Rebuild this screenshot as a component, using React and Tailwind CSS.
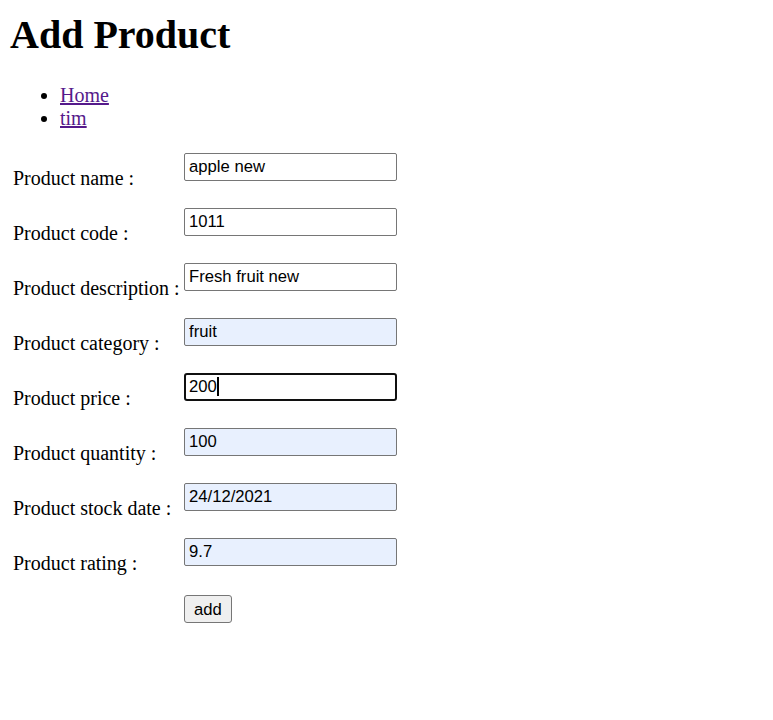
import React from "react";

const rows = [
  { label: "Product name :", value: "apple new", auto: false },
  { label: "Product code :", value: "1011", auto: false },
  { label: "Product description :", value: "Fresh fruit new", auto: false },
  { label: "Product category :", value: "fruit", auto: true },
  { label: "Product price :", value: "200", focus: true },
  { label: "Product quantity :", value: "100", auto: true },
  { label: "Product stock date :", value: "24/12/2021", auto: true },
  { label: "Product rating :", value: "9.7", auto: true },
];

export default function App() {
  return (
    <div className="min-h-screen bg-white p-[10px] font-['Liberation_Serif',serif] text-black">
      <h1 className="mt-[2px] text-[40px] font-bold leading-[46px]">Add Product</h1>
      <ul className="mt-[26px] list-disc pl-[50px] text-[20px] leading-[23px]">
        <li>
          <a href="#" className="text-[#551a8b] underline">Home</a>
        </li>
        <li>
          <a href="#" className="text-[#551a8b] underline">tim</a>
        </li>
      </ul>
      <form className="mt-[21px]" onSubmit={(e) => e.preventDefault()}>
        {rows.map((r) => (
          <div key={r.label} className="flex h-[55px]">
            <label className="w-[174px] pl-[3px] pt-[16px] text-[20px] leading-[23px]">
              {r.label}
            </label>
            {r.focus ? (
              <div className="mt-[2px] flex h-[28px] w-[213px] items-center rounded-[3px] border-2 border-[#101010] bg-white pl-[3px] font-['Liberation_Sans',sans-serif] text-[16.67px] leading-[19px]">
                <span className="-mt-[1px]">{r.value}</span>
                <span className="-mt-[1px] inline-block h-[19px] w-[2px] bg-black" />
              </div>
            ) : (
              <input
                readOnly
                value={r.value}
                className={`mt-[2px] h-[28px] w-[213px] rounded-[2px] border border-[#767676] pb-[1px] pl-[4px] font-['Liberation_Sans',sans-serif] text-[16.67px] leading-[19px] text-black outline-none ${
                  r.auto ? "bg-[#e8f0fe]" : "bg-white"
                }`}
              />
            )}
          </div>
        ))}
        <div className="flex">
          <div className="w-[174px]" />
          <button
            type="submit"
            className="mt-[4px] h-[28px] w-[48px] rounded-[3px] border border-[#767676] bg-[#efefef] font-['Liberation_Sans',sans-serif] text-[16.67px] leading-[19px] text-black"
          >
            add
          </button>
        </div>
      </form>
    </div>
  );
}
